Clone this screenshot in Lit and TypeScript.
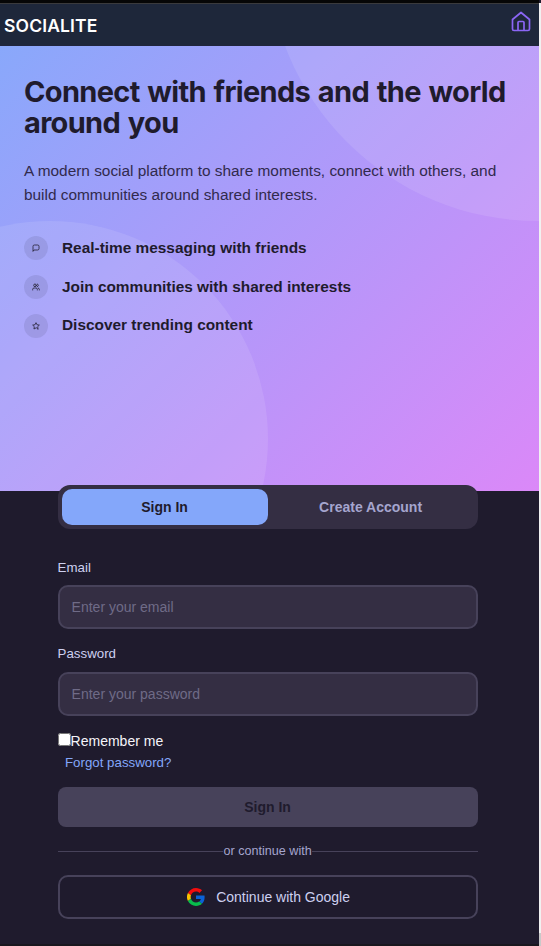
import { LitElement, html, css, svg } from "lit";
import { customElement, state } from "lit/decorators.js";
import { classMap } from "lit/directives/class-map.js";

const icons = {
  chat: svg`<path d="M3 21V7a4 4 0 0 1 4-4h10a4 4 0 0 1 4 4v7a4 4 0 0 1-4 4H7z"/>`,
  users: svg`<circle cx="9" cy="7" r="4"/><path d="M2 21v-2a4 4 0 0 1 4-4h6a4 4 0 0 1 4 4v2M16 3.130a4 4 0 0 1 0 7.750M22 21v-2a4 4 0 0 0-3-3.850"/>`,
  star: svg`<path d="m12 17.750-6.170 3.250 1.180-6.870-5-4.870 6.900-1L12 2l3.090 6.260 6.900 1-5 4.870 1.180 6.870z"/>`,
};

@customElement("app-root")
export class AppRoot extends LitElement {
  @state() private tab = "signin";

  static styles = css`
    :host { display: flex; width: 541px; height: 946px; overflow: hidden; background: #1f1b2d; font-family: "Liberation Sans", Arial, sans-serif; color: #cdd0f0; }
    * { box-sizing: border-box; }
    .page { width: 539px; height: 946px; border-top: 3px solid #060606; border-bottom: 2px solid #19171f; }
    .gutter { width: 2px; height: 943px; margin-top: 3px; background: linear-gradient(#f1f1f1 930px, #c9c9c9 930px); }
    header { height: 43px; padding: 0 7px 0 4px; display: flex; justify-content: space-between; background: #1e273a; border-top: 1px solid #3a3a3c; border-bottom: 1px solid #20253c; }
    .brand { font: 600 17.500px/42px Inter, sans-serif; color: #fff; letter-spacing: .15px; padding-top: 1px; }
    .home { width: 22px; height: 22px; margin-top: 7px; color: #8b66f5; }
    svg { display: block; fill: none; stroke: currentColor; stroke-width: 2; stroke-linecap: round; stroke-linejoin: round; }
    .hero { height: 445px; padding: 30px 24px 0; position: relative; overflow: hidden; background: linear-gradient(135deg, #89a8fb, #db88f8); color: #1f1b2d; }
    .orb { position: absolute; border-radius: 50%; background: rgba(255,255,255,.1); }
    .orb.one { width: 539px; height: 539px; top: -364px; right: -268px; }
    .orb.two { width: 436px; height: 436px; top: 175px; left: -168px; }
    .copy { position: relative; }
    h1 { margin: 0; font: 700 29px/31px Inter, sans-serif; letter-spacing: -.67px; word-spacing: 1.500px; white-space: nowrap; }
    .lead { margin: 21px 0 0; font-size: 15.400px; line-height: 24px; color: #312a4d; white-space: nowrap; }
    ul { list-style: none; margin: 29px 0 0; padding: 0; display: grid; gap: 15px; }
    li { display: flex; align-items: center; gap: 14px; height: 24px; font-size: 15.400px; font-weight: 700; white-space: nowrap; }
    li:last-child .label { padding-bottom: 2px; }
    .dot { width: 24px; height: 24px; border-radius: 50%; background: rgba(31,27,45,.1); display: grid; place-items: center; }
    .dot svg { width: 8px; height: 8px; stroke-width: 2.300; }
    main { width: 420px; margin: -6px 0 0 57.600px; position: relative; }
    .tabs { display: flex; height: 44px; padding: 4px; border-radius: 12px; background: #342e43; }
    button { font: 700 14px "Liberation Sans", Arial, sans-serif; border: 0; padding: 0; white-space: nowrap; }
    .tab { flex: 1; border-radius: 10px; background: transparent; color: #a5a5ce; }
    .tab.on { background: #84a7fa; color: #1f1b2d; }
    label.name { display: block; font-size: 13.300px; line-height: 16px; }
    .email { margin-top: 31px; }
    .pass { margin-top: 17px; }
    .field { display: block; width: 100%; height: 44px; margin-top: 9px; padding: 0 12px; border: 2px solid #47425a; border-radius: 10px; background: #342e43; color: #cdd0f0; font: 14px "Liberation Sans", Arial, sans-serif; outline: none; }
    .pass + .field { margin-top: 10px; }
    .field::placeholder { color: #6f6b87; opacity: 1; }
    .remember { display: flex; margin-top: 16px; font-size: 14px; line-height: 18px; color: #f5f5fa; height: 19px; }
    .remember input { width: 13px; height: 13px; margin: 1px 0 0; }
    .forgot { display: block; width: fit-content; margin: 4px 0 0 7.400px; font-size: 13.300px; line-height: 16px; color: #84a7fa; text-decoration: none; }
    .submit { display: block; width: 100%; height: 40px; margin-top: 16px; border-radius: 8px; background: #47425a; color: #1f1b2d; }
    .divider { display: flex; align-items: center; height: 16px; margin-top: 16px; font-size: 12.600px; line-height: 16px; color: #a5a5ce; white-space: nowrap; }
    .divider::before, .divider::after { content: ""; flex: 1; height: 1px; margin-top: 1px; background: #47425a; }
    .google { display: flex; width: 100%; height: 44px; margin-top: 16px; padding-left: 2px; align-items: center; justify-content: center; gap: 11px; border: 2px solid #47425a; border-radius: 10px; background: transparent; color: #cdd0f0; font-weight: 400; }
    .google svg { width: 18px; height: 18px; stroke: none; }
  `;

  private feature(icon: unknown, text: string) {
    return html`<li><span class="dot"><svg viewBox="0 0 24 24">${icon}</svg></span><span class="label">${text}</span></li>`;
  }

  private tabButton(id: string, text: string) {
    return html`<button class=${classMap({ tab: true, on: this.tab === id })} @click=${() => (this.tab = id)}>${text}</button>`;
  }

  render() {
    return html`
      <div class="page">
        <header>
          <div class="brand">SOCIALITE</div>
          <svg class="home" viewBox="0 0 22 22"><path d="M2.500 8.500 11 1.500l8.500 7V18a1.500 1.500 0 0 1-1.500 1.500H4A1.500 1.500 0 0 1 2.500 18zM8 19.500v-8a1 1 0 0 1 1-1h4a1 1 0 0 1 1 1v8" stroke-width="1.700"/></svg>
        </header>
        <section class="hero">
          <div class="orb one"></div><div class="orb two"></div>
          <div class="copy">
            <h1>Connect with friends and the world<br>around you</h1>
            <p class="lead">A modern social platform to share moments, connect with others, and<br>build communities around shared interests.</p>
            <ul>
              ${this.feature(icons.chat, "Real-time messaging with friends")}
              ${this.feature(icons.users, "Join communities with shared interests")}
              ${this.feature(icons.star, "Discover trending content")}
            </ul>
          </div>
        </section>
        <main>
          <div class="tabs">${this.tabButton("signin", "Sign In")}${this.tabButton("create", "Create Account")}</div>
          <label class="name email" for="email">Email</label>
          <input class="field" id="email" type="email" placeholder="Enter your email">
          <label class="name pass" for="password">Password</label>
          <input class="field" id="password" type="password" placeholder="Enter your password">
          <label class="remember"><input type="checkbox">Remember me</label>
          <a class="forgot" href="#">Forgot password?</a>
          <button class="submit">Sign In</button>
          <div class="divider">or continue with</div>
          <button class="google">
            <svg viewBox="0 0 48 48"><path fill="#f20d0d" d="M24 9.500c3.540 0 6.710 1.220 9.210 3.600l6.850-6.850C35.900 2.380 30.470 0 24 0 14.620 0 6.510 5.380 2.560 13.220l7.980 6.190C12.430 13.720 17.740 9.500 24 9.500z"/><path fill="#0b62d6" d="M46.980 24.550c0-1.570-.15-3.090-.38-4.550H24v9.020h12.940c-.58 2.960-2.260 5.480-4.780 7.180l7.730 6c4.510-4.180 7.090-10.360 7.090-17.650z"/><path fill="#fbc400" d="M10.530 28.590A14.500 14.500 0 0 1 10.530 19.410l-7.980-6.190A24 24 0 0 0 2.560 34.780z"/><path fill="#08bd4c" d="M24 48c6.480 0 11.930-2.130 15.890-5.810l-7.730-6c-2.150 1.450-4.920 2.300-8.160 2.300-6.260 0-11.570-4.220-13.470-9.910l-7.980 6.190C6.510 42.620 14.620 48 24 48z"/></svg>
            Continue with Google
          </button>
        </main>
      </div>
      <div class="gutter"></div>`;
  }
}
